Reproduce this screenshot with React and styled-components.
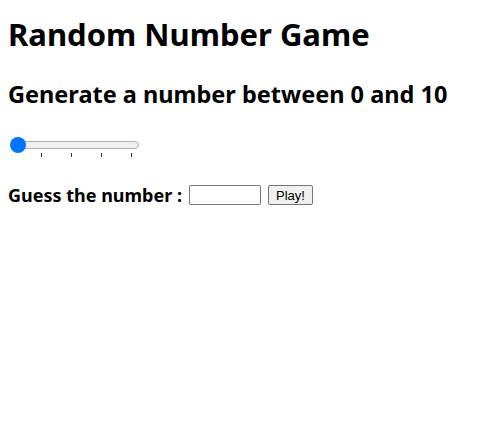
import styled, { createGlobalStyle } from "styled-components";

const Global = createGlobalStyle`
  body {
    margin: 8px;
    background: #fff;
    font-family: "Noto Sans", "Noto Sans CJK KR", sans-serif;
    color: #000;
  }
`;

export default function App() {
  return (
    <>
      <Global />
      <Title>Random Number Game</Title>
      <Subtitle>Generate a number between 0 and 10</Subtitle>
      <Slider>
        <Rail>
          <Track />
          <Thumb />
        </Rail>
        <TickRow>
          {[1, 2, 3, 4].map((n) => (
            <Tick key={n} />
          ))}
        </TickRow>
      </Slider>
      <GuessRow>
        <Label>Guess the number :</Label>
        <Field type="text" />
        <PlayButton>Play!</PlayButton>
      </GuessRow>
    </>
  );
}

const Title = styled.h1`
  font-size: 31px;
  font-weight: 700;
  margin: 6px 0 0;
  line-height: 40px;
`;

const Subtitle = styled.h2`
  font-size: 23.5px;
  font-weight: 700;
  margin: 24px 0 0;
  line-height: 32px;
`;

const Slider = styled.div`
  display: flex;
  flex-direction: column;
  width: 130px;
  margin-top: 27px;
  margin-left: 1px;
`;

const Rail = styled.div`
  position: relative;
  height: 16px;
  display: flex;
  align-items: center;
  padding-left: 2px;
`;

const Track = styled.div`
  flex: 1;
  height: 6px;
  border-radius: 4px;
  background: #efefef;
  border: 1px solid #b2b2b2;
`;

const Thumb = styled.div`
  position: absolute;
  left: 1px;
  top: 0;
  width: 16px;
  height: 16px;
  border-radius: 50%;
  background: #0075ff;
`;

const TickRow = styled.div`
  display: flex;
  gap: 29px;
  padding-left: 32px;
`;

const Tick = styled.div`
  width: 1px;
  height: 4px;
  background: #333;
`;

const GuessRow = styled.div`
  display: flex;
  align-items: center;
  margin-top: 26px;
`;

const Label = styled.span`
  font-size: 18px;
  font-weight: 700;
`;

const Field = styled.input`
  width: 66px;
  height: 16px;
  margin-left: 7px;
  padding: 1px 2px;
  border: 1px solid #767676;
  border-radius: 2px;
  font-size: 13px;
`;

const PlayButton = styled.button`
  margin-left: 7px;
  height: 20px;
  padding: 1px 7px;
  font-family: "Liberation Sans", Arial, sans-serif;
  font-size: 13px;
  background: #efefef;
  border: 1px solid #767676;
  border-radius: 2px;
  color: #000;
`;
